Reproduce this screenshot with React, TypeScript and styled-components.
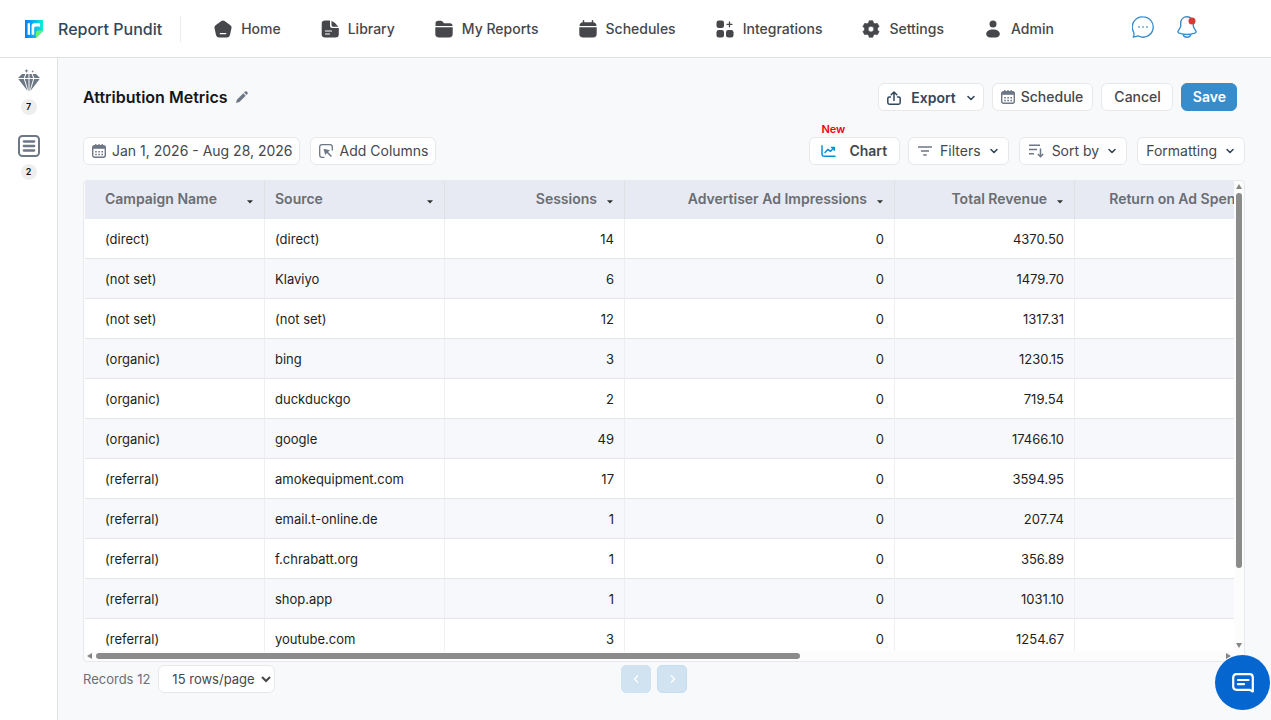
import React from "react";
import styled, { createGlobalStyle } from "styled-components";

const GlobalStyle = createGlobalStyle`
  *, *::before, *::after { box-sizing: border-box; }
  body { margin: 0; background: #f8f9fb; }
  body, button, select { font-family: Inter, "Liberation Sans", sans-serif; }
  ul { list-style: none; margin: 0; padding: 0; }
  a { color: inherit; text-decoration: none; }
  svg { display: block; flex: none; }
`;

const Page = styled.div`
  display: flex;
  flex-direction: column;
  height: 100vh;
`;

const TopBar = styled.header`
  display: flex;
  align-items: center;
  flex: none;
  height: 58px;
  padding: 0 73px 0 25px;
  background: #fff;
  border-bottom: 1px solid #e0e0e0;
`;

const Brand = styled.a`
  display: flex;
  align-items: center;
  gap: 15px;
  height: 26px;
  padding-right: 18px;
  border-right: 1px solid #ececec;
  color: #33475b;
  font-size: 16px;
  font-weight: 500;
  white-space: nowrap;
`;

const NavList = styled.ul`
  display: flex;
  gap: 40px;
  padding-left: 33px;
`;

const NavLink = styled.a`
  display: flex;
  align-items: center;
  gap: 9px;
  color: #45474b;
  font-size: 14px;
  font-weight: 500;
  line-height: 20px;
  white-space: nowrap;
`;

const TopActions = styled.div`
  display: flex;
  gap: 22px;
  margin-left: auto;
  padding-bottom: 4px;
`;

const IconButton = styled.button`
  padding: 0;
  border: 0;
  background: none;
  color: ${(p) => p.color ?? "#6d7785"};
  cursor: pointer;
`;

const Body = styled.div`
  display: flex;
  flex: 1;
  min-height: 0;
`;

const SideBar = styled.aside`
  display: flex;
  flex-direction: column;
  align-items: center;
  gap: 20px;
  flex: none;
  width: 58px;
  padding-top: 11px;
  background: #fff;
  border-right: 1px solid #e0e0e0;
`;

const SideLink = styled.a`
  display: flex;
  flex-direction: column;
  align-items: center;
  gap: 7px;
  color: #6d7785;
`;

const Count = styled.span`
  width: 16px;
  border-radius: 8px;
  background: #eee;
  color: #111;
  font-size: 9px;
  font-weight: 600;
  line-height: 16px;
  text-align: center;
`;

const Main = styled.main`
  display: flex;
  flex-direction: column;
  flex: 1;
  min-width: 0;
  padding: 25px 26px 27px 25px;
`;

const Bar = styled.div<{ $right?: number; $bottom: number }>`
  display: flex;
  align-items: center;
  flex: none;
  padding-right: ${(p) => p.$right ?? 0}px;
  margin-bottom: ${(p) => p.$bottom}px;
`;

const Title = styled.h1`
  margin: 0 8px 0 0;
  color: #141619;
  font-size: 16px;
  font-weight: 600;
  line-height: 28px;
`;

const Group = styled.div<{ $gap: number; $end?: boolean }>`
  display: flex;
  gap: ${(p) => p.$gap}px;
  margin-left: ${(p) => (p.$end ? "auto" : "0")};
`;

const Button = styled.button<{ $weight?: number; $primary?: boolean; $gap?: number; $pad?: string }>`
  position: relative;
  display: flex;
  align-items: center;
  gap: ${(p) => p.$gap ?? 6}px;
  height: 28px;
  padding: ${(p) => p.$pad ?? "0 9px 1px 8px"};
  border: 1px solid ${(p) => (p.$primary ? "#378ccb" : "#e7e8ea")};
  border-radius: 6px;
  background: ${(p) => (p.$primary ? "#378ccb" : "#fff")};
  color: ${(p) => (p.$primary ? "#fff" : p.color ?? "#45474b")};
  font-size: 14px;
  font-weight: ${(p) => p.$weight ?? 400};
  white-space: nowrap;
  cursor: pointer;
`;

const NewTag = styled.span`
  position: absolute;
  top: -16px;
  left: 11px;
  color: #f0000f;
  font-size: 11px;
  font-weight: 600;
  line-height: 14px;
`;

const Frame = styled.section`
  display: grid;
  grid-template: minmax(0, 1fr) 10px / minmax(0, 1fr) 10px;
  flex: 1;
  min-height: 0;
  padding-left: 1px;
  border: 1px solid #e8e9ec;
  border-radius: 4px;
  background: #fcfcfc;
`;

const Viewport = styled.div`
  overflow: auto;
  scrollbar-width: none;
  background: #fff;
`;

const Table = styled.table`
  table-layout: fixed;
  width: 1187px;
  border-collapse: separate;
  border-spacing: 0;
`;

const HeadCell = styled.th<{ $first?: boolean }>`
  height: 38px;
  padding: 0 10px 2px ${(p) => (p.$first ? 20 : 10)}px;
  border-right: 1px solid #dfe0e3;
  background: #e7eaf2;
  color: #6a6d73;
  font-size: 14px;
  font-weight: 600;
`;

const HeadLabel = styled.div<{ $numeric?: boolean }>`
  display: flex;
  align-items: center;
  justify-content: ${(p) => (p.$numeric ? "flex-end" : "space-between")};
  gap: 9px;
  line-height: 20px;
  white-space: nowrap;
`;

const SortButton = styled(IconButton)`
  padding-top: 6px;
  color: #333;
`;

const Row = styled.tr`
  background: #fff;
  &:nth-child(even) { background: #f7f8fc; }
`;

const Cell = styled.td<{ $numeric?: boolean; $first?: boolean }>`
  height: 40px;
  padding: 0 10px 0 ${(p) => (p.$first ? 20 : 10)}px;
  border-right: 1px solid #efeff1;
  border-bottom: 1px solid #e4e5e8;
  color: #1c1e21;
  font-size: 13px;
  text-align: ${(p) => (p.$numeric ? "right" : "left")};
`;

const Track = styled.div<{ $vertical?: boolean }>`
  display: flex;
  flex-direction: ${(p) => (p.$vertical ? "column" : "row")};
  align-items: center;
  gap: 4px;
  padding: ${(p) => (p.$vertical ? "3px 0" : "0 3px 0 2px")};
  color: #858585;
`;

const Groove = styled.div`
  display: flex;
  flex-direction: inherit;
  flex: 1;
`;

const Thumb = styled.div<{ $size: number }>`
  flex: 0 0 ${(p) => p.$size}%;
  min-width: 6px;
  min-height: 6px;
  border-radius: 3px;
  background: #8b8b8b;
`;

const Footer = styled.footer`
  display: grid;
  grid-template-columns: 1fr auto 1fr;
  align-items: center;
  flex: none;
  padding: 3px 20px 0 0;
`;

const Records = styled.label`
  display: flex;
  align-items: center;
  gap: 8px;
  color: #6a6f76;
  font-size: 13px;
`;

const PageSize = styled.select`
  width: 117px;
  height: 28px;
  padding: 0 0 0 9px;
  border: 1px solid #e7e8ea;
  border-radius: 6px;
  background: #fff;
  color: #45474b;
  font-size: 13px;
`;

const PageButton = styled.button<{ $outlined?: boolean }>`
  display: grid;
  place-items: center;
  width: 30px;
  height: 28px;
  padding: 0;
  border: 1px solid ${(p) => (p.$outlined ? "#c4def3" : "#d1e2f0")};
  border-radius: 5px;
  background: #d1e2f0;
  color: #fff;
`;

const ChatButton = styled.button`
  position: fixed;
  right: 1px;
  bottom: 10px;
  display: grid;
  place-items: center;
  width: 55px;
  height: 55px;
  padding: 0;
  border: 0;
  border-radius: 50%;
  background: #0566cf;
  color: #fff;
  cursor: pointer;
`;

const Logo = () => (
  <svg width="18" height="18" viewBox="0 0 18 18" aria-hidden="true">
    <defs>
      <linearGradient id="brand" x1="0" y1="0" x2="1" y2="0">
        <stop offset="0" stopColor="#0a7cff" />
        <stop offset="0.5" stopColor="#06b4f4" />
        <stop offset="1" stopColor="#0df0d0" />
      </linearGradient>
    </defs>
    <path d="M0 0h18v11l-7 7H0z" fill="url(#brand)" />
    <path d="M18 10.5 10.8 18v-5.2q0-2.3 2.3-2.3z" fill="#6df25a" />
    <path d="M2.600 3.200h2.400v11.600H2.600z" fill="#fff" />
    <path d="M6.600 14.800V5.700q0-2.500 2.500-2.500h6v3.200h-4.200q-1.700 0-1.700 1.700v6.700z" fill="#fff" />
  </svg>
);

const navIcons: Record<string, React.ReactNode> = {
  Home: (
    <>
      <path d="M7.4 1q1.6-1.1 3.2 0l5.8 4.2q1.4 1 1.1 2.700l-1.400 6.700q-.6 2.900-3.200 2.900H5.100q-2.600 0-3.200-2.900L.5 7.900q-.3-1.700 1.100-2.700z" />
      <path d="M6.300 13.600h5.400" stroke="#fff" strokeWidth="1.300" strokeLinecap="round" />
    </>
  ),
  Library: (
    <>
      <path d="M4 .500h5v5q0 2.500 2.500 2.500h6.300v6.200q0 3.300-3.300 3.300H4q-3.300 0-3.300-3.300V3.800Q.700.500 4 .500z" />
      <path d="M10.500.700q4 1.800 6.800 6h-5.200q-1.600 0-1.600-1.600z" />
      <path d="M4.500 11h6M4.500 14h4" stroke="#fff" strokeWidth="1.200" strokeLinecap="round" />
    </>
  ),
  "My Reports": (
    <>
      <path d="M.5 6V3.500Q.5.700 3.300.700h2q1.500 0 2.500 1.100l1.200 1.500h6q2.500 0 2.500 2.700z" />
      <path d="M.3 7.200h17.400v6.500q0 3.800-3.800 3.800H4.100q-3.800 0-3.800-3.800z" />
    </>
  ),
  Schedules: (
    <>
      <path d="M.5 6q.2-3.700 3.700-3.700h9.600q3.500 0 3.700 3.700z" />
      <path d="M4.500.800v3M13.500.800v3" stroke="currentColor" strokeWidth="1.500" strokeLinecap="round" />
      <path d="M.3 7.200h17.400v6.500q0 3.800-3.800 3.800H4.100q-3.800 0-3.800-3.800z" />
    </>
  ),
  Integrations: (
    <>
      <rect x=".500" y=".500" width="7.500" height="7.500" rx="2.300" />
      <rect x=".500" y="10" width="7.500" height="7.500" rx="2.300" />
      <rect x="10" y="10" width="7.500" height="7.500" rx="2.300" />
      <path d="M13.500 1.800v5M11 4.300h5" stroke="currentColor" strokeWidth="1.300" strokeLinecap="round" />
    </>
  ),
  Settings: (
    <path
      fillRule="evenodd"
      d="M7.200.700h3.600l.700 2.200 1.500.900 2.300-.500 1.800 3.100L15.500 8.200v1.700l1.600 1.800-1.800 3-2.300-.500-1.500.9-.7 2.200H7.200l-.7-2.200-1.500-.9-2.300.5-1.800-3 1.600-1.800V8.200L.9 6.400l1.800-3.100 2.300.5 1.500-.9zM9 6.300a2.800 2.800 0 1 0 0 5.600 2.800 2.800 0 0 0 0-5.600z"
      stroke="currentColor"
      strokeWidth=".6"
      strokeLinejoin="round"
    />
  ),
  Admin: (
    <>
      <circle cx="9" cy="4" r="3.500" />
      <path d="M9 9.500c4.300 0 6.800 2 6.800 4.500 0 2.300-2 3.500-4 3.500H6.200c-2 0-4-1.200-4-3.500 0-2.500 2.500-4.500 6.800-4.500z" />
    </>
  ),
};

const NavIcon = ({ name }: { name: string }) => (
  <svg width="18" height="18" viewBox="0 0 18 18" fill="currentColor" aria-hidden="true">
    {navIcons[name]}
  </svg>
);

const CalendarIcon = () => (
  <svg width="14" height="14" viewBox="0 0 14 14" fill="none" stroke="#6d7785" aria-hidden="true">
    <rect x=".7" y="1.700" width="12.600" height="11.600" rx="2" strokeWidth="1.400" />
    <path d="M.7 3.300h12.600" strokeWidth="3" />
    <path d="M3.800 0v2M7 0v2M10.200 0v2" strokeWidth="1.300" />
    <path d="M3.200 7.800h8M3.200 10.400h8" strokeWidth="1.500" strokeDasharray="1.600 1.500" />
  </svg>
);

const Chevron = () => (
  <svg width="10" height="8" viewBox="0 0 10 8" fill="none" stroke="#33475b" strokeWidth="1.600" strokeLinecap="round" strokeLinejoin="round" aria-hidden="true">
    <path d="M2 2.500l3 3 3-3" />
  </svg>
);

const Arrow = ({ d, vertical }: { d: string; vertical?: boolean }) => (
  <svg width={vertical ? 6 : 5} height={vertical ? 5 : 6} viewBox={vertical ? "0 0 6 5" : "0 0 5 6"} fill="currentColor" aria-hidden="true">
    <path d={d} />
  </svg>
);

const columns = [
  { label: "Campaign Name", width: 180, numeric: false },
  { label: "Source", width: 180, numeric: false },
  { label: "Sessions", width: 180, numeric: true },
  { label: "Advertiser Ad Impressions", width: 270, numeric: true },
  { label: "Total Revenue", width: 180, numeric: true },
  { label: "Return on Ad Spend", width: 197, numeric: true },
];

const rows = [
  ["(direct)", "(direct)", "14", "0", "4370.50", ""],
  ["(not set)", "Klaviyo", "6", "0", "1479.70", ""],
  ["(not set)", "(not set)", "12", "0", "1317.31", ""],
  ["(organic)", "bing", "3", "0", "1230.15", ""],
  ["(organic)", "duckduckgo", "2", "0", "719.54", ""],
  ["(organic)", "google", "49", "0", "17466.10", ""],
  ["(referral)", "amokequipment.com", "17", "0", "3594.95", ""],
  ["(referral)", "email.t-online.de", "1", "0", "207.74", ""],
  ["(referral)", "f.chrabatt.org", "1", "0", "356.89", ""],
  ["(referral)", "shop.app", "1", "0", "1031.10", ""],
  ["(referral)", "youtube.com", "3", "0", "1254.67", ""],
];

export default function App() {
  return (
    <Page>
      <GlobalStyle />
      <TopBar>
        <Brand href="#">
          <Logo />
          Report Pundit
        </Brand>
        <nav>
          <NavList>
            {Object.keys(navIcons).map((name) => (
              <li key={name}>
                <NavLink href="#">
                  <NavIcon name={name} />
                  {name}
                </NavLink>
              </li>
            ))}
          </NavList>
        </nav>
        <TopActions>
          <IconButton color="#378ccb" aria-label="Messages">
            <svg width="22" height="22" viewBox="0 0 22 22" fill="none" stroke="currentColor" strokeWidth="1.300" strokeLinecap="round" strokeLinejoin="round">
              <path d="M11 .8A10.200 10.200 0 1 1 6.600 20.200Q5.500 19.800 4.500 20.300L1.200 21q1-1.500.8-3.200-.1-1-.4-1.800A10.200 10.200 0 0 1 11 .8z" />
              <path d="M6.800 11h.4M10.800 11h.4M14.800 11h.4" strokeWidth="1.500" />
            </svg>
          </IconButton>
          <IconButton color="#378ccb" aria-label="Notifications">
            <svg width="22" height="22" viewBox="0 0 22 22" fill="none" stroke="currentColor" strokeWidth="1.400" strokeLinejoin="round">
              <path d="M11 .8C7.200.8 4.700 3.600 4.700 7.200v2.600c0 1-.4 1.700-1 2.700l-1.500 2.400c-.6 1.100-.1 1.900 1 2.300 5 1.600 10.600 1.600 15.600 0 1.100-.4 1.600-1.200 1-2.300l-1.500-2.400c-.6-1-1-1.700-1-2.700V7.200C17.300 3.600 14.800.8 11 .8z" />
              <path d="M7 18.200q.9 3 4 3t4-3" />
              <circle cx="16" cy="5" r="3.500" fill="#d63a30" stroke="none" />
            </svg>
          </IconButton>
        </TopActions>
      </TopBar>
      <Body>
        <SideBar>
          <SideLink href="#" aria-label="Premium reports">
            <svg width="22" height="23" viewBox="0 0 22 23" fill="currentColor" aria-hidden="true">
              <path d="M8.500 0l.6 1.300 1.400.6-1.400.6-.6 1.400-.6-1.400-1.400-.6 1.400-.6zM14.700 1l.4 1 1 .4-1 .4-.4 1-.4-1-1-.4 1-.4z" />
              <path d="M4 5h3.300L5.800 9H0zM8.400 5h2.100v4H6.900zM11.500 5h2.100l1.500 4h-3.600zM14.700 5H18l4 4h-5.800zM.3 10h5.500l3.800 12zM6.900 10h3.600v12.500zM11.500 10h3.600l-3.600 12.500zM16.200 10h5.500l-9.300 12z" />
            </svg>
            <Count>7</Count>
          </SideLink>
          <SideLink href="#" aria-label="Lists">
            <svg width="22" height="22" viewBox="0 0 22 22" fill="none" stroke="currentColor" aria-hidden="true">
              <rect x="1" y="1" width="20" height="20" rx="3.500" strokeWidth="2" />
              <path d="M5.800 6.500h10.400M5.800 11h10.400M5.800 15.500h10.400" strokeWidth="2.300" strokeLinecap="round" />
            </svg>
            <Count>2</Count>
          </SideLink>
        </SideBar>
        <Main>
          <Bar $right={8} $bottom={26}>
            <Title>Attribution Metrics</Title>
            <IconButton aria-label="Rename report">
              <svg width="12" height="12" viewBox="0 0 12 12" fill="currentColor">
                <path d="M7.300 2.300l2.400 2.400-6.300 6.300L0 12l.9-3.300zM8.100 1.500L9 .6q.9-.9 1.800 0l.6.600q.9.9 0 1.800l-.9.9z" />
              </svg>
            </IconButton>
            <Group $gap={8} $end>
              <Button $weight={600} $gap={10} $pad="1px 7px 0 8px" color="#33475b">
                <svg width="14" height="14" viewBox="0 0 14 14" fill="none" stroke="currentColor" strokeWidth="1.500" strokeLinecap="round" strokeLinejoin="round" aria-hidden="true">
                  <path d="M3.500 6H2.200Q.8 6 .8 7.400v4.200q0 1.600 1.600 1.600h9.200q1.600 0 1.600-1.600V7.400Q13.200 6 11.800 6h-1.300M7 9.500V1.200M4.200 3.800L7 1l2.800 2.800" />
                </svg>
                Export
                <Chevron />
              </Button>
              <Button $weight={500}>
                <CalendarIcon />
                Schedule
              </Button>
              <Button $weight={500} $pad="0 11px 1px 12px">Cancel</Button>
              <Button $weight={600} $primary $pad="0 10px 1px 11px">Save</Button>
            </Group>
          </Bar>
          <Bar $bottom={15}>
            <Group $gap={10}>
              <Button $pad="0 6px 1px 8px">
                <CalendarIcon />
                Jan 1, 2026 - Aug 28, 2026
              </Button>
              <Button $pad="0 6px 1px 8px">
                <svg width="15" height="14" viewBox="0 0 15 14" fill="none" stroke="#6d7785" strokeWidth="1.300" strokeLinecap="round" aria-hidden="true">
                  <path d="M5 13.300H3Q.7 13.300.7 11V3Q.7.700 3 .700h8q2.300 0 2.300 2.300v3" />
                  <path d="M4.500 4.800l6.500 1.400-2 1.700 4 4-1.100 1.100-4-4L6.200 11z" fill="#6d7785" stroke="none" />
                </svg>
                Add Columns
              </Button>
            </Group>
            <Group $gap={10} $end>
              <Group $gap={8}>
                <Button $weight={600} $gap={13} $pad="0 12px 1px 11px">
                  <NewTag>New</NewTag>
                  <svg width="15" height="12" viewBox="0 0 15 12" fill="none" stroke="#0a8fd6" strokeWidth="1.500" strokeLinecap="round" strokeLinejoin="round" aria-hidden="true">
                    <path d="M1 .800v8.700Q1 11.200 2.700 11.200H14M4 7.500l3-3.200 2.500 2L13 2.800M10.500 2.500h2.800v2.800" />
                  </svg>
                  Chart
                </Button>
                <Button $gap={8} $pad="0 9px 1px">
                  <svg width="14" height="10" viewBox="0 0 14 10" stroke="#6d7785" strokeWidth="1.600" aria-hidden="true">
                    <path d="M0 1h14M3 5h8M5.300 9h3.400" />
                  </svg>
                  Filters
                  <Chevron />
                </Button>
              </Group>
              <Button $gap={8} $pad="0 9px 1px">
                <svg width="15" height="14" viewBox="0 0 15 14" fill="none" stroke="#6d7785" strokeWidth="1.500" aria-hidden="true">
                  <path d="M0 1.300h11M0 5.500h8M0 9.700h5M11.500 4.500v8M8.800 10l2.700 2.700 2.700-2.700" />
                </svg>
                Sort by
                <Chevron />
              </Button>
              <Button $gap={8} $pad="0 9px 1px 8px">
                Formatting
                <Chevron />
              </Button>
            </Group>
          </Bar>
          <Frame>
            <Viewport>
              <Table>
                <colgroup>
                  {columns.map((c) => (
                    <col key={c.label} width={c.width} />
                  ))}
                </colgroup>
                <thead>
                  <tr>
                    {columns.map((c, i) => (
                      <HeadCell key={c.label} scope="col" $first={i === 0}>
                        <HeadLabel $numeric={c.numeric}>
                          {c.label}
                          <SortButton aria-label={`Sort ${c.label}`}>
                            <svg width="8" height="4" viewBox="0 0 8 4" fill="currentColor">
                              <path d="M1 .3h6L4 3.600z" />
                            </svg>
                          </SortButton>
                        </HeadLabel>
                      </HeadCell>
                    ))}
                  </tr>
                </thead>
                <tbody>
                  {rows.map((row, r) => (
                    <Row key={r}>
                      {row.map((value, i) => (
                        <Cell key={i} $first={i === 0} $numeric={columns[i].numeric}>
                          {value}
                        </Cell>
                      ))}
                    </Row>
                  ))}
                </tbody>
              </Table>
            </Viewport>
            <Track $vertical aria-hidden="true">
              <Arrow vertical d="M3 0l3 5H0z" />
              <Groove>
                <Thumb $size={84} />
              </Groove>
              <Arrow vertical d="M0 0h6L3 5z" />
            </Track>
            <Track aria-hidden="true">
              <Arrow d="M5 0v6L0 3z" />
              <Groove>
                <Thumb $size={62.5} />
              </Groove>
              <Arrow d="M0 0l5 3-5 3z" />
            </Track>
          </Frame>
          <Footer>
            <Records>
              Records 12
              <PageSize aria-label="Rows per page" defaultValue="15">
                <option value="15">15 rows/page</option>
                <option value="30">30 rows/page</option>
              </PageSize>
            </Records>
            <Group $gap={6}>
              <PageButton aria-label="Previous page">
                <svg width="8" height="8" viewBox="0 0 8 8" fill="none" stroke="currentColor" strokeWidth="1.300">
                  <path d="M6 .5L2.500 4 6 7.500" />
                </svg>
              </PageButton>
              <PageButton $outlined aria-label="Next page">
                <svg width="8" height="8" viewBox="0 0 8 8" fill="none" stroke="currentColor" strokeWidth="1.300">
                  <path d="M3 .5L6.500 4 3 7.500" />
                </svg>
              </PageButton>
            </Group>
          </Footer>
        </Main>
      </Body>
      <ChatButton aria-label="Open chat">
        <svg width="22" height="20" viewBox="0 0 22 20" fill="none" stroke="currentColor" strokeWidth="2.200" strokeLinecap="round" strokeLinejoin="round">
          <path d="M4.500 1.200h13q3.300 0 3.300 3.300v14l-3.300-1.700h-13q-3.300 0-3.300-3.300v-9q0-3.300 3.300-3.300z" />
          <path d="M6 7h10.500M6 11.200h6" />
        </svg>
      </ChatButton>
    </Page>
  );
}
